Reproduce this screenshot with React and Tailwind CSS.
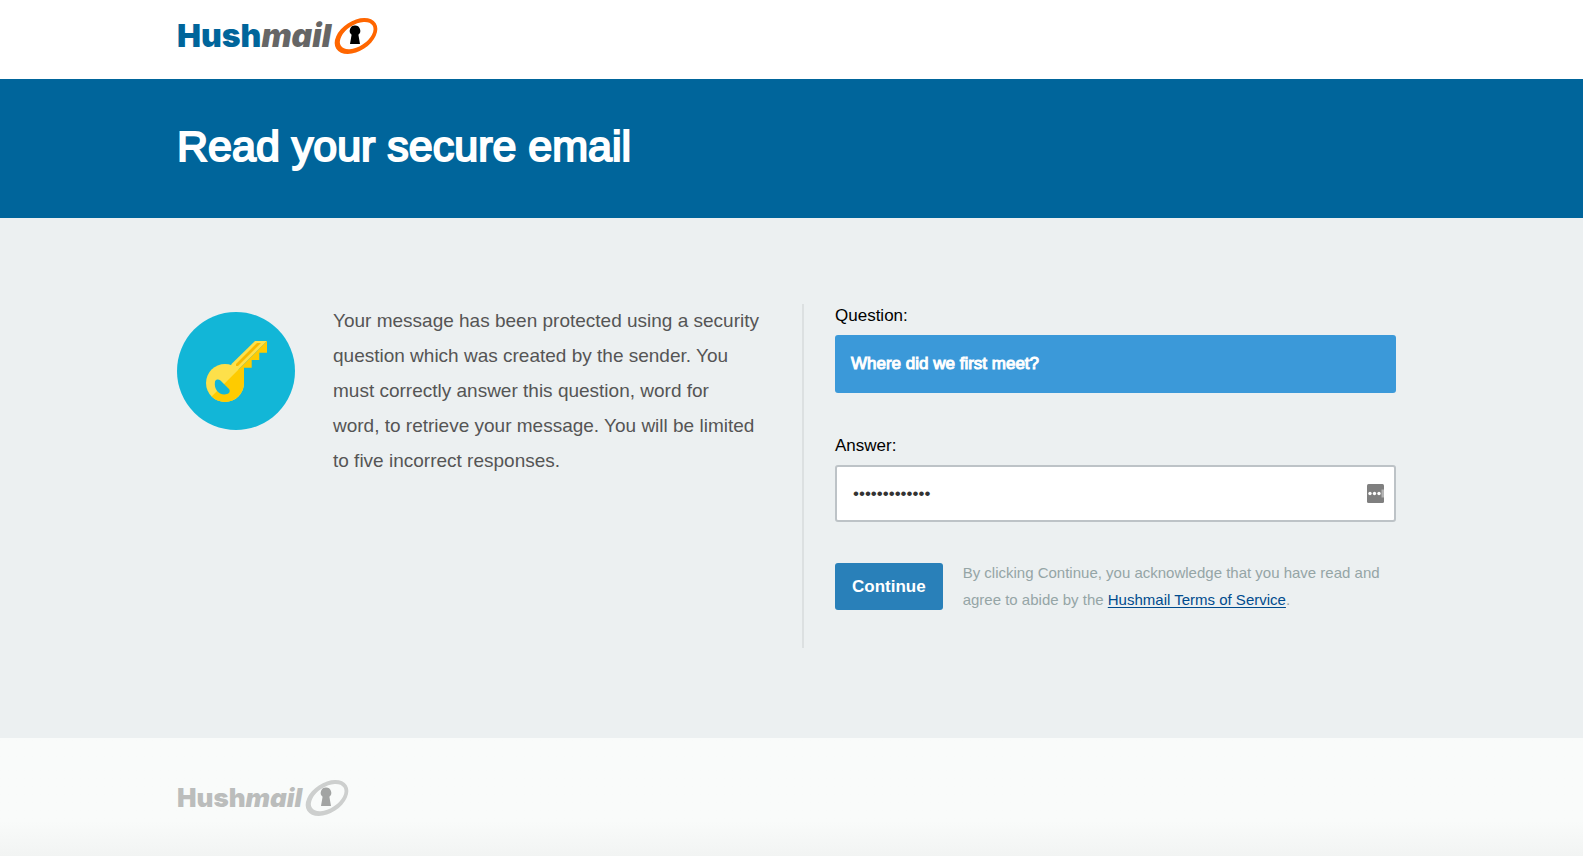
import React, { useState } from 'react';

const Logo = ({ muted = false }) => (
  <span className="inline-flex items-center">
    <span
      className={`font-['Inter',sans-serif] font-black leading-9 ${
        muted ? 'text-[26px] text-[#bbbdbc]' : 'text-[32px] text-[#00659b]'
      }`}
    >
      Hush
      <span className={`italic ${muted ? 'text-[#bbbdbc]' : 'text-[#666666]'}`}>mail</span>
    </span>
    <svg className="ml-[3px]" width="44" height="36" viewBox="0 0 44 36" aria-hidden="true">
      <g transform="translate(22 18) rotate(-33)">
        <path
          fillRule="evenodd"
          fill={muted ? '#cdcfce' : '#ff6600'}
          d="M-23.5 0A23.5 15 0 1 0 23.5 0A23.5 15 0 1 0 -23.5 0ZM-18 0A18.8 10.8 0 1 1 19.6 0A18.8 10.8 0 1 1 -18 0Z"
        />
      </g>
      <path
        fill={muted ? '#a2a4a3' : '#000000'}
        d="M21 7.6a5.2 5.2 0 0 1 3.4 9.2l1.6 9.2h-10l1.6-9.2a5.2 5.2 0 0 1 3.4-9.2z"
      />
    </svg>
  </span>
);

const KeyIcon = () => (
  <svg className="h-[118px] w-[118px] shrink-0" viewBox="0 0 118 118" aria-hidden="true">
    <circle cx="59" cy="59" r="59" fill="#12b6d7" />
    {/* Light half of the key */}
    <circle cx="48" cy="71" r="19" fill="#fde04a" />
    <path d="M54.5 52L78 29H90L48 71z" fill="#fde04a" />
    {/* Shaded half */}
    <path
      d="M90 29V40.7H82.3V48H74.7V55.7H67V71A19 19 0 0 1 34.6 84.4z"
      fill="#fecb00"
    />
    <path d="M80 31H84L61 54H59V52z" fill="#f7b900" />
    {/* Hole */}
    <path
      d="M38 69.5C39 67 41.5 67 43.5 68.5L52 77C53.5 79 52.5 81.5 50 82C43 84 36.5 78 38 69.5z"
      fill="#12b6d7"
    />
  </svg>
);

const App = () => {
  const [answer, setAnswer] = useState('coffeehouse12');

  return (
    <div className="flex min-h-screen flex-col bg-[#ecf0f1] font-['Liberation_Sans',Arial,sans-serif] text-black">
      <header className="bg-white pr-[10px]">
        <div className="mx-auto flex h-[79px] max-w-[1219px] items-start pt-[18px]">
          <a href="#home" aria-label="Hushmail">
            <Logo />
          </a>
        </div>
      </header>

      {/* Page title */}
      <div className="bg-[#00659b] pr-[10px]">
        <div className="mx-auto max-w-[1219px] pt-[43px] pb-12">
          <h1 className="text-[43px] leading-12 font-normal text-white [-webkit-text-stroke:2px]">
            Read your secure email
          </h1>
        </div>
      </div>

      <main className="pt-[86px] pr-[10px] pb-[90px]">
        <div className="mx-auto grid max-w-[1219px] grid-cols-[627fr_592fr]">
          <section className="flex items-start gap-[38px] border-r-2 border-[#dce0e1] pt-2 pr-8">
            <KeyIcon />
            <p className="-mt-[9px] text-[19px] leading-[35px] text-[#555555]">
              Your message has been protected using a security
              <br />
              question which was created by the sender. You
              <br />
              must correctly answer this question, word for
              <br />
              word, to retrieve your message. You will be limited
              <br />
              to five incorrect responses.
            </p>
          </section>

          <form className="pb-[35px] pl-[31px] text-[17px]" onSubmit={(e) => e.preventDefault()}>
            <p className="leading-6">Question:</p>
            <div className="mt-[7px] rounded-[3px] bg-[#3b99d9] px-4 py-[17px] leading-6 text-white [-webkit-text-stroke:1px]">
              Where did we first meet?
            </div>

            <label htmlFor="answer" className="mt-[41px] block leading-6">
              Answer:
            </label>
            <div className="relative mt-[7px]">
              <input
                id="answer"
                type="password"
                value={answer}
                onChange={(e) => setAnswer(e.target.value)}
                className="block h-[57px] w-full rounded-[3px] border-2 border-[#bdc3c7] bg-white px-4 text-[#333333] outline-none"
              />
              <svg
                className="absolute top-[19px] right-3 h-[19px] w-[17px]"
                viewBox="0 0 17 19"
                aria-hidden="true"
              >
                <rect width="17" height="19" rx="1.5" fill="#7f7f7f" />
                <circle cx="3" cy="9.5" r="1.7" fill="#ffffff" />
                <circle cx="7.5" cy="9.5" r="1.7" fill="#ffffff" />
                <circle cx="12" cy="9.5" r="1.7" fill="#ffffff" />
                <path d="M14.5 5.5h2.5v8h-2.5z" fill="#b5b5b5" />
              </svg>
            </div>

            <div className="mt-[41px] flex items-start gap-5">
              <button
                type="submit"
                className="h-[47px] shrink-0 rounded-[3px] bg-[#2980b9] px-[17px] font-bold text-white"
              >
                Continue
              </button>
              <p className="-mt-1 text-[15px] leading-[27px] text-[#95a5a6]">
                By clicking Continue, you acknowledge that you have read and agree to abide by the{' '}
                <a href="#terms" className="text-[#004b8d] underline underline-offset-2">
                  Hushmail Terms of Service
                </a>
                .
              </p>
            </div>
          </form>
        </div>
      </main>

      <footer className="flex-1 bg-linear-to-b from-[#f9fbfa] from-70% to-[#f2f4f3] pr-[10px]">
        <div className="mx-auto max-w-[1219px] pt-[42px]">
          <Logo muted />
        </div>
      </footer>
    </div>
  );
};

export default App;
